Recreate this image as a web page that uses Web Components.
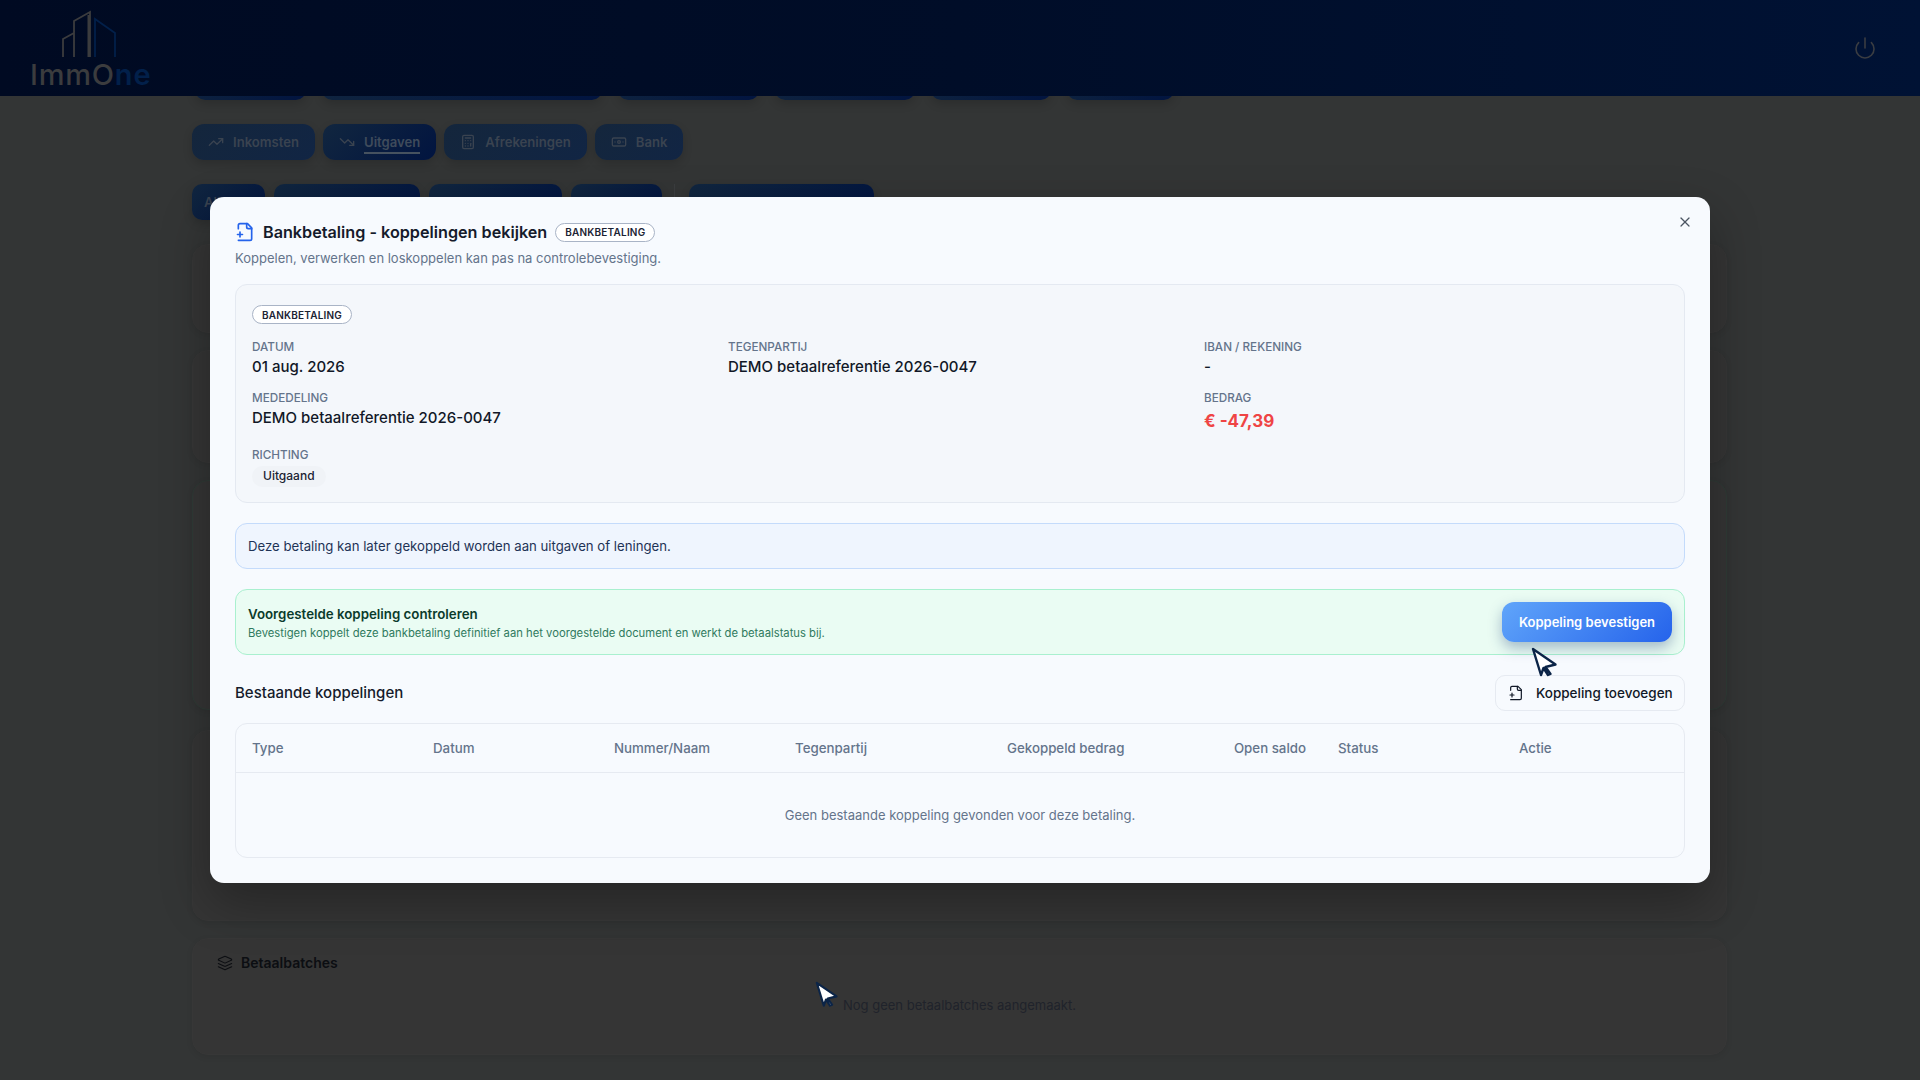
<!DOCTYPE html>
<html lang="nl">
<head>
<meta charset="utf-8">
<title>ImmOne</title>
<style>
  html, body { margin: 0; height: 1080px; overflow: hidden; }
  body { background: #333535; font-family: Inter, "Liberation Sans", sans-serif; position: relative; }
  main { display: flex; flex-direction: column; padding: 0 193px 0 192px; }
  .pills { display: flex; gap: 8px; }
  .top-row { margin-top: -36px; gap: 16px; padding-left: 3px; }
  .tab-row { margin-top: 24px; }
  .sub-row { margin-top: 24px; gap: 9px; }
  .sub-row i { width: 1px; margin: 0 5px 0 3px; background: #3b3d3f; }
  .cards { display: flex; flex-direction: column; gap: 17px; margin-top: 24px; }
</style>
</head>
<body>

<im-header></im-header>

<main>
  <div class="pills top-row">
    <im-pill tone="deep" style="width:111px;height:40px"></im-pill>
    <im-pill tone="deep" style="width:280px;height:40px"></im-pill>
    <im-pill tone="deep" style="width:141px;height:40px"></im-pill>
    <im-pill tone="deep" style="width:140px;height:40px"></im-pill>
    <im-pill tone="deep" style="width:120px;height:40px"></im-pill>
    <im-pill tone="deep" style="width:107px;height:40px"></im-pill>
  </div>
  <div class="pills tab-row">
    <im-pill icon="trending-up">Inkomsten</im-pill>
    <im-pill icon="trending-down" active>Uitgaven</im-pill>
    <im-pill icon="calculator">Afrekeningen</im-pill>
    <im-pill icon="banknote">Bank</im-pill>
  </div>
  <div class="pills sub-row">
    <im-pill tone="deep" style="width:73px">Alle</im-pill>
    <im-pill tone="deep" style="width:146px"></im-pill>
    <im-pill tone="deep" style="width:133px"></im-pill>
    <im-pill tone="deep" style="width:91px"></im-pill>
    <i></i>
    <im-pill tone="deep" style="width:185px"></im-pill>
  </div>
  <div class="cards">
    <im-card style="height:89px"></im-card>
    <im-card style="height:113px"></im-card>
    <im-card tone="green" style="height:230px"></im-card>
    <im-card style="height:191px;margin-top:3px"></im-card>
    <im-card style="height:117px">
      <im-batches></im-batches>
    </im-card>
  </div>
</main>

<im-modal>
  <span slot="title">Bankbetaling - koppelingen bekijken</span>
  <span slot="subtitle">Koppelen, verwerken en loskoppelen kan pas na controlebevestiging.</span>
  <im-details></im-details>
  <im-notice>Deze betaling kan later gekoppeld worden aan uitgaven of leningen.</im-notice>
  <im-suggestion></im-suggestion>
  <im-links></im-links>
</im-modal>

<im-cursor style="left:1531px;top:647px"></im-cursor>
<im-cursor dim style="left:815px;top:981px"></im-cursor>

<script>
// lucide-achtige iconen, alles op een viewBox van 24
const ICONS = {
  'trending-up': '<path d="M22 7 13.5 15.5 8.5 10.5 2 17"/><path d="M16 7h6v6"/>',
  'trending-down': '<path d="M22 17 13.5 8.5 8.5 13.5 2 7"/><path d="M16 17h6v-6"/>',
  'calculator': '<rect x="4" y="2" width="16" height="20" rx="2"/><path d="M8 6h8"/><path d="M16 14v4"/><path d="M16 10h.01"/><path d="M12 10h.01"/><path d="M8 10h.01"/><path d="M12 14h.01"/><path d="M8 14h.01"/><path d="M12 18h.01"/><path d="M8 18h.01"/>',
  'banknote': '<rect x="2" y="6" width="20" height="12" rx="2"/><circle cx="12" cy="12" r="2"/><path d="M6 12h.01M18 12h.01"/>',
  'file-plus': '<path d="M4 22h14a2 2 0 0 0 2-2V7l-5-5H6a2 2 0 0 0-2 2v4"/><path d="M14 2v4a2 2 0 0 0 2 2h4"/><path d="M3 15h6"/><path d="M6 12v6"/>',
  'x': '<path d="M18 6 6 18"/><path d="m6 6 12 12"/>',
  'power': '<path d="M12 2v10"/><path d="M18.4 6.6a9 9 0 1 1-12.79 0"/>',
  'layers': '<path d="m12.83 2.18a2 2 0 0 0-1.66 0L2.6 6.08a1 1 0 0 0 0 1.83l8.58 3.91a2 2 0 0 0 1.66 0l8.58-3.9a1 1 0 0 0 0-1.83Z"/><path d="m22 17.65-9.17 4.16a2 2 0 0 1-1.66 0L2 17.65"/><path d="m22 12.65-9.17 4.16a2 2 0 0 1-1.66 0L2 12.65"/>'
};

function icon(name, size, color, width) {
  return `<svg width="${size}" height="${size}" viewBox="0 0 24 24" fill="none" stroke="${color}" stroke-width="${width || 2}" stroke-linecap="round" stroke-linejoin="round" style="display:block;flex:none">${ICONS[name]}</svg>`;
}

// basis: shadow root met wat html
class ImBase extends HTMLElement {
  connectedCallback() {
    if (this.shadowRoot) return;
    this.attachShadow({ mode: 'open' });
    this.shadowRoot.innerHTML = this.render();
  }
}

class ImHeader extends ImBase {
  render() {
    return `<style>
      :host { display: flex; position: relative; z-index: 2; height: 96px; box-sizing: border-box;
        align-items: flex-start; justify-content: space-between; padding: 0 43px 0 30px;
        background: linear-gradient(90deg, #000a22 0%, #000d28 50%, #001234 100%); }
      .logo { display: flex; flex-direction: column; position: relative; padding-top: 65px; }
      svg.b { position: absolute; left: 0; top: 0; }
      .name { font-weight: 500; font-size: 29px; line-height: 20px; letter-spacing: .8px; color: #3b3c3e; }
      .name b { font-weight: 600; color: #02204a; }
      .power { margin-top: 36px; }
    </style>
    <div class="logo">
      <svg class="b" width="100" height="60" viewBox="0 0 100 60" fill="none" stroke-width="1.8">
        <path d="M33 57V39l11-6v24M44 33V21l16-9v45M58.400 15v42" stroke="#3b3c3e"/>
        <path d="M65 57V19l20 14v24" stroke="#02204a"/>
      </svg>
      <div class="name">ImmO<b>ne</b></div>
    </div>
    <div class="power">${icon('power', 24, '#3a3d42', 1.6)}</div>`;
  }
}

class ImPill extends ImBase {
  render() {
    const active = this.hasAttribute('active');
    const deep = this.getAttribute('tone') === 'deep';
    const bg = active || deep
      ? 'linear-gradient(135deg, #11263f, #011440)'
      : 'linear-gradient(135deg, #14263c, #112544)';
    const name = this.getAttribute('icon');
    return `<style>
      :host { display: inline-flex; align-items: center; gap: 9px; height: 36px; box-sizing: border-box;
        padding: 0 16px; border-radius: 12px; background: ${bg};
        box-shadow: 0 4px 10px rgba(0,0,0,.16);
        font-weight: 600; font-size: 13.100px; line-height: 20px; color: #3a4350; white-space: nowrap; }
      :host([tone="deep"]) { padding: 0 12px; border-radius: 10px; }
      span { ${active ? 'border-bottom: 2px solid #46525f; color: #3f4b5b; padding-top: 2px;' : ''} }
    </style>
    ${name ? icon(name, 16, '#3a4350') : ''}<span><slot></slot></span>`;
  }
}

class ImCard extends ImBase {
  render() {
    const green = this.getAttribute('tone') === 'green';
    return `<style>
      :host { display: block; box-sizing: border-box; border-radius: 16px; background: #353535;
        border: 1px solid ${green ? '#2f3b36' : '#373737'}; box-shadow: 0 2px 6px rgba(0,0,0,.08); }
    </style><slot></slot>`;
  }
}

class ImBatches extends ImBase {
  render() {
    return `<style>
      :host { display: block; padding: 13px 24px; position: relative; }
      h3 { display: flex; align-items: center; gap: 8px; margin: 0; font-size: 14px; line-height: 22px; font-weight: 600; color: #0c0e12; }
      p { margin: 21px 0 0; text-align: center; font-size: 13px; line-height: 20px; color: #20232b; }
    </style>
    <h3>${icon('layers', 16, '#0c0e12', 1.6)}Betaalbatches</h3>
    <p>Nog geen betaalbatches aangemaakt.</p>`;
  }
}

class ImBadge extends ImBase {
  render() {
    return `<style>
      :host { display: inline-flex; align-items: center; height: 17px; padding: 0 9px; border-radius: 999px;
        background: #fff; border: 1px solid #a9b4c6; box-sizing: content-box;
        font-weight: 600; font-size: 10px; line-height: 1; letter-spacing: .2px; color: #1b2333; }
    </style><slot></slot>`;
  }
}

class ImModal extends ImBase {
  render() {
    return `<style>
      :host { position: absolute; left: 210px; top: 197px; width: 1500px; height: 686px; box-sizing: border-box;
        display: flex; flex-direction: column; padding: 23px 25px 0; border-radius: 14px; z-index: 3;
        background: #f7fafe; box-shadow: 0 20px 50px rgba(0,0,0,.3);
        color: #111827; }
      .title { display: flex; align-items: center; gap: 8px; height: 24px; }
      h2 { margin: 0; font-size: 16.200px; line-height: 24px; font-weight: 600; color: #151b2b; }
      .sub { margin-top: 4px; height: 20px; font-size: 13px; line-height: 20px; color: #64748b; }
      .close { position: absolute; right: 17px; top: 17px; width: 16px; height: 16px; }
      .body { display: flex; flex-direction: column; gap: 20px; margin-top: 16px; }
    </style>
    <div class="title">
      <span>${icon('file-plus', 20, '#2563eb', 2)}</span>
      <h2><slot name="title"></slot></h2>
      <im-badge>BANKBETALING</im-badge>
    </div>
    <div class="sub"><slot name="subtitle"></slot></div>
    <div class="close">${icon('x', 16, '#4b5563', 1.8)}</div>
    <div class="body"><slot></slot></div>`;
  }
}

class ImField extends ImBase {
  render() {
    return `<style>
      :host { display: flex; flex-direction: column; gap: 1px; }
      .l { font-weight: 500; font-size: 11.700px; line-height: 16px; color: #64748b; }
      .v { font-weight: 500; font-size: 15px; line-height: 22px; color: #111827; }
      :host([amount]) .v { font-weight: 700; font-size: 17px; line-height: 28px; color: #ef4444; }
    </style>
    <div class="l">${this.getAttribute('label')}</div>
    <div class="v"><slot></slot></div>`;
  }
}

class ImDetails extends ImBase {
  render() {
    return `<style>
      :host { display: flex; flex-direction: column; align-items: flex-start; box-sizing: border-box; height: 219px; padding: 20px 16px 0; border: 1px solid #e4e9f1;
        border-radius: 12px; background: #f4f7fb; }
      .g { display: grid; align-self: stretch; grid-template-columns: repeat(3, 1fr); column-gap: 12px; row-gap: 12px; margin-top: 15px; }
      .wide { grid-column: span 2; }
      .pill { display: inline-flex; align-items: center; height: 21px; padding: 0 11px; border-radius: 999px;
        background: #f0f3f7; font-weight: 500; font-size: 12px; line-height: 1; color: #1b2333; }
    </style>
    <im-badge>BANKBETALING</im-badge>
    <div class="g">
      <im-field label="DATUM">01 aug. 2026</im-field>
      <im-field label="TEGENPARTIJ">DEMO betaalreferentie 2026-0047</im-field>
      <im-field label="IBAN / REKENING">-</im-field>
      <im-field class="wide" label="MEDEDELING">DEMO betaalreferentie 2026-0047</im-field>
      <im-field amount label="BEDRAG">€ -47,39</im-field>
      <im-field class="wide" label="RICHTING"><span class="pill">Uitgaand</span></im-field>
    </div>`;
  }
}

class ImNotice extends ImBase {
  render() {
    return `<style>
      :host { display: flex; align-items: center; box-sizing: border-box; height: 46px; padding: 0 12px;
        border: 1px solid #c4dbfb; border-radius: 12px; background: #eff5fe;
        font-size: 13.200px; line-height: 20px; color: #1e3356; }
    </style><slot></slot>`;
  }
}

class ImSuggestion extends ImBase {
  render() {
    return `<style>
      :host { display: flex; align-items: center; justify-content: space-between; box-sizing: border-box; height: 66px;
        padding: 0 12px; border: 1px solid #a9f0cf; border-radius: 12px; background: #eafcf3; }
      h4 { margin: 2px 0 0; font-size: 13.300px; line-height: 18px; font-weight: 600; color: #0b3b2c; }
      p { margin: 2px 0 0; font-size: 11.250px; line-height: 16px; color: #2f7a5e; }
      button { width: 170px; height: 40px; border: 0; border-radius: 12px; padding: 0; color: #fff;
        background: linear-gradient(135deg, #60a5fa, #2563eb); box-shadow: 0 6px 14px rgba(30,64,120,.35);
        font-family: inherit; font-weight: 600; font-size: 13px; line-height: 20px; }
    </style>
    <div>
      <h4>Voorgestelde koppeling controleren</h4>
      <p>Bevestigen koppelt deze bankbetaling definitief aan het voorgestelde document en werkt de betaalstatus bij.</p>
    </div>
    <button>Koppeling bevestigen</button>`;
  }
}

class ImLinks extends ImBase {
  render() {
    const cols = [['Type'], ['Datum'], ['Nummer/Naam'], ['Tegenpartij'], ['Gekoppeld bedrag'], ['Open saldo', 'r'], ['Status'], ['Actie']];
    return `<style>
      :host { display: block; }
      .top { display: flex; align-items: center; justify-content: space-between; height: 36px; }
      h3 { margin: 0; font-size: 15px; line-height: 22px; font-weight: 500; color: #151b2b; }
      button { display: flex; align-items: center; gap: 12px; box-sizing: border-box; width: 190px; height: 36px; padding: 0 12px;
        border: 1px solid #e6eaf1; border-radius: 10px; background: transparent; color: #111827;
        font-family: inherit; font-weight: 500; font-size: 13.500px; line-height: 20px; white-space: nowrap; }
      .table { margin-top: 12px; height: 135px; box-sizing: border-box; border: 1px solid #e6eaf1; border-radius: 12px; }
      .head { display: grid; grid-template-columns: 181px 181px 181px 212px 165px 166px 181px 1fr; height: 48px;
        align-items: center; border-bottom: 1px solid #e6eaf1; }
      .head div { padding: 0 16px; font-size: 13.300px; font-weight: 500; color: #64748b; }
      .head .r { text-align: right; }
      .empty { height: 84px; display: flex; align-items: center; justify-content: center; font-size: 13px; color: #64748b; }
    </style>
    <div class="top">
      <h3>Bestaande koppelingen</h3>
      <button>${icon('file-plus', 16, '#111827', 1.8)}Koppeling toevoegen</button>
    </div>
    <div class="table">
      <div class="head">${cols.map(c => `<div class="${c[1] || ''}">${c[0]}</div>`).join('')}</div>
      <div class="empty">Geen bestaande koppeling gevonden voor deze betaling.</div>
    </div>`;
  }
}

class ImCursor extends ImBase {
  render() {
    const s = this.hasAttribute('dim') ? .88 : 1;
    return `<style>
      :host { position: absolute; z-index: 4; display: block; width: 28px; height: 31px; }
    </style>
    <svg width="${28 * s}" height="${31 * s}" viewBox="0 0 28 31">
      <path d="M2 2 L10 28 L12.500 21 L17 28 L19.500 27 L14.500 20 L24.500 17.500 Z" fill="#fff" stroke="#0b2447" stroke-width="2.400" stroke-linejoin="round"/>
    </svg>`;
  }
}

customElements.define('im-header', ImHeader);
customElements.define('im-pill', ImPill);
customElements.define('im-card', ImCard);
customElements.define('im-batches', ImBatches);
customElements.define('im-badge', ImBadge);
customElements.define('im-modal', ImModal);
customElements.define('im-field', ImField);
customElements.define('im-details', ImDetails);
customElements.define('im-notice', ImNotice);
customElements.define('im-suggestion', ImSuggestion);
customElements.define('im-links', ImLinks);
customElements.define('im-cursor', ImCursor);
</script>
</body>
</html>
